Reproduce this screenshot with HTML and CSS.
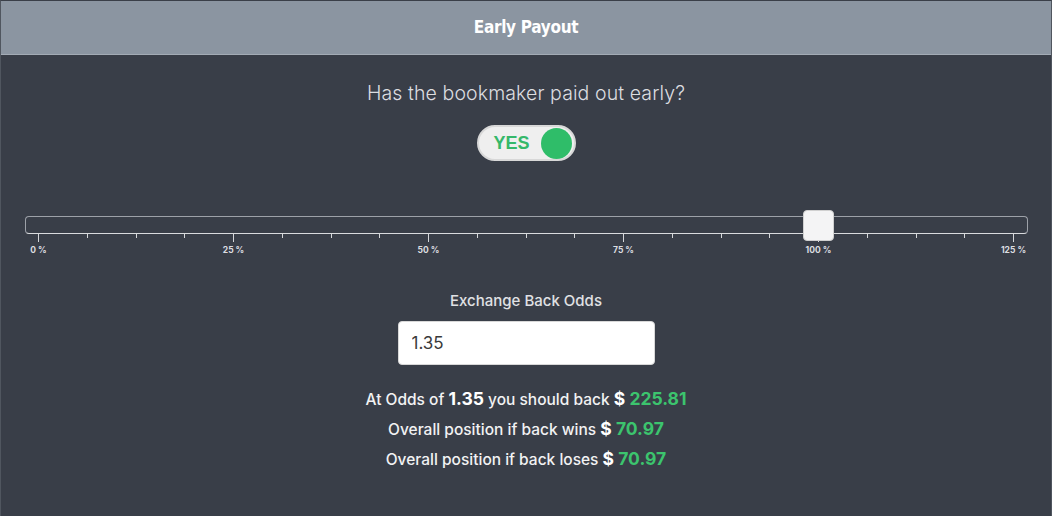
FILE: index.html
```html
<!DOCTYPE html>
<html lang="en">
<head>
    <meta charset="UTF-8">
    <meta name="viewport" content="width=device-width, initial-scale=1.0">
    <title>Early Payout</title>
    <link rel="stylesheet" href="styles.css">
</head>
<body>
    <div class="panel">
        <div class="panel-header">Early Payout</div>
        <div class="panel-body">
            <p class="question">Has the bookmaker paid out early?</p>
            <div class="toggle">
                <span class="toggle-text">YES</span>
                <span class="toggle-knob"></span>
            </div>

            <div class="slider">
                <div class="slider-track">
                    <div class="slider-thumb"></div>
                </div>
                <div class="slider-ticks">
                    <span class="tick major"></span><span class="tick"></span><span class="tick"></span><span class="tick"></span>
                    <span class="tick major"></span><span class="tick"></span><span class="tick"></span><span class="tick"></span>
                    <span class="tick major"></span><span class="tick"></span><span class="tick"></span><span class="tick"></span>
                    <span class="tick major"></span><span class="tick"></span><span class="tick"></span><span class="tick"></span>
                    <span class="tick major"></span><span class="tick"></span><span class="tick"></span><span class="tick"></span>
                    <span class="tick major"></span>
                </div>
                <div class="slider-labels">
                    <span class="label"><b>0 %</b></span>
                    <span class="label"><b>25 %</b></span>
                    <span class="label"><b>50 %</b></span>
                    <span class="label"><b>75 %</b></span>
                    <span class="label"><b>100 %</b></span>
                    <span class="label"><b>125 %</b></span>
                </div>
            </div>

            <label class="field-label" for="backOdds">Exchange Back Odds</label>
            <input type="text" id="backOdds" class="field" value="1.35">

            <div class="results">
                <p>At Odds of <strong class="big">1.35</strong> you should back <strong>$</strong> <strong class="money">225.81</strong></p>
                <p>Overall position if back wins <strong>$</strong> <strong class="money">70.97</strong></p>
                <p>Overall position if back loses <strong>$</strong> <strong class="money">70.97</strong></p>
            </div>
        </div>
    </div>
</body>
</html>
```

FILE: styles.css
```css
body {
    margin: 0;
    background: #393e48;
    font-family: "Inter", "Open Sans", sans-serif;
    color: #e4e5e8;
}
.panel {
    height: 516px;
    border-top: 1px solid #3a3f48;
    border-left: 1px solid #50565f;
    border-right: 1px solid #50565f;
    box-sizing: border-box;
}
.panel-header {
    height: 53px;
    line-height: 53px;
    background: #8b95a1;
    border-bottom: 1px solid #a3abb5;
    color: #fff;
    text-align: center;
    font-family: "DejaVu Sans Condensed", "DejaVu Sans", sans-serif;
    font-weight: bold;
    font-size: 17px;
    letter-spacing: -0.3px;
}
.panel-body {
    display: flex;
    flex-direction: column;
    align-items: center;
}
.question {
    margin: 25px 0 0;
    font-size: 19.5px;
    font-weight: 300;
    line-height: 26px;
    letter-spacing: 0.1px;
    color: #dcdde0;
}
.toggle {
    margin-top: 19px;
    width: 99px;
    height: 36px;
    box-sizing: border-box;
    background: #efefef;
    border: 2px solid #d8d8d8;
    border-radius: 18px;
    display: flex;
    align-items: center;
    justify-content: space-between;
    padding: 0 2px 0 15px;
}
.toggle-text {
    color: #35b86a;
    font-family: "Liberation Sans", Arial, sans-serif;
    font-weight: bold;
    font-size: 18px;
}
.toggle-knob {
    width: 31px;
    height: 31px;
    border-radius: 50%;
    background: #2fbd69;
}

.slider {
    align-self: stretch;
    margin: 55px 23px 0 24px;
}
.slider-track {
    position: relative;
    height: 16px;
    border: 1.5px solid #9da1a8;
    border-bottom-color: #d9dbde;
    border-radius: 4px;
}
.slider-thumb {
    position: absolute;
    left: 777px;
    top: -7px;
    width: 29px;
    height: 29px;
    background: #f4f4f5;
    border: 1px solid #d0d0d0;
    border-radius: 4px;
}
.slider-ticks {
    display: flex;
    justify-content: space-between;
    padding: 0 14px 0 13px;
    height: 8px;
}
.tick {
    width: 1px;
    height: 4px;
    background: #d5d7da;
}
.tick.major {
    height: 8px;
}
.slider-labels {
    display: flex;
    justify-content: space-between;
    padding: 0 14px 0 13px;
    margin-top: 3px;
}
.label {
    width: 1px;
    display: flex;
    justify-content: center;
    white-space: nowrap;
    font-size: 8.5px;
    color: #dcdde0;
}

.field-label {
    margin-top: 36px;
    font-size: 15px;
    font-weight: 500;
    color: #e0e1e4;
}
.field {
    margin-top: 11px;
    width: 257px;
    height: 44px;
    box-sizing: border-box;
    border: 1px solid #d8d8d8;
    border-radius: 4px;
    background: #fff;
    padding: 0 13px;
    font-family: "Inter", sans-serif;
    font-size: 17px;
    color: #3a3a3a;
}
.results {
    margin-top: 19px;
    text-align: center;
}
.results p {
    margin: 0;
    height: 30px;
    line-height: 30px;
    font-size: 15.5px;
    font-weight: 500;
    color: #f2f2f3;
}
.results strong {
    font-size: 17.5px;
    font-weight: 700;
    color: #fff;
}
.results .money {
    color: #3cc46e;
}
```
